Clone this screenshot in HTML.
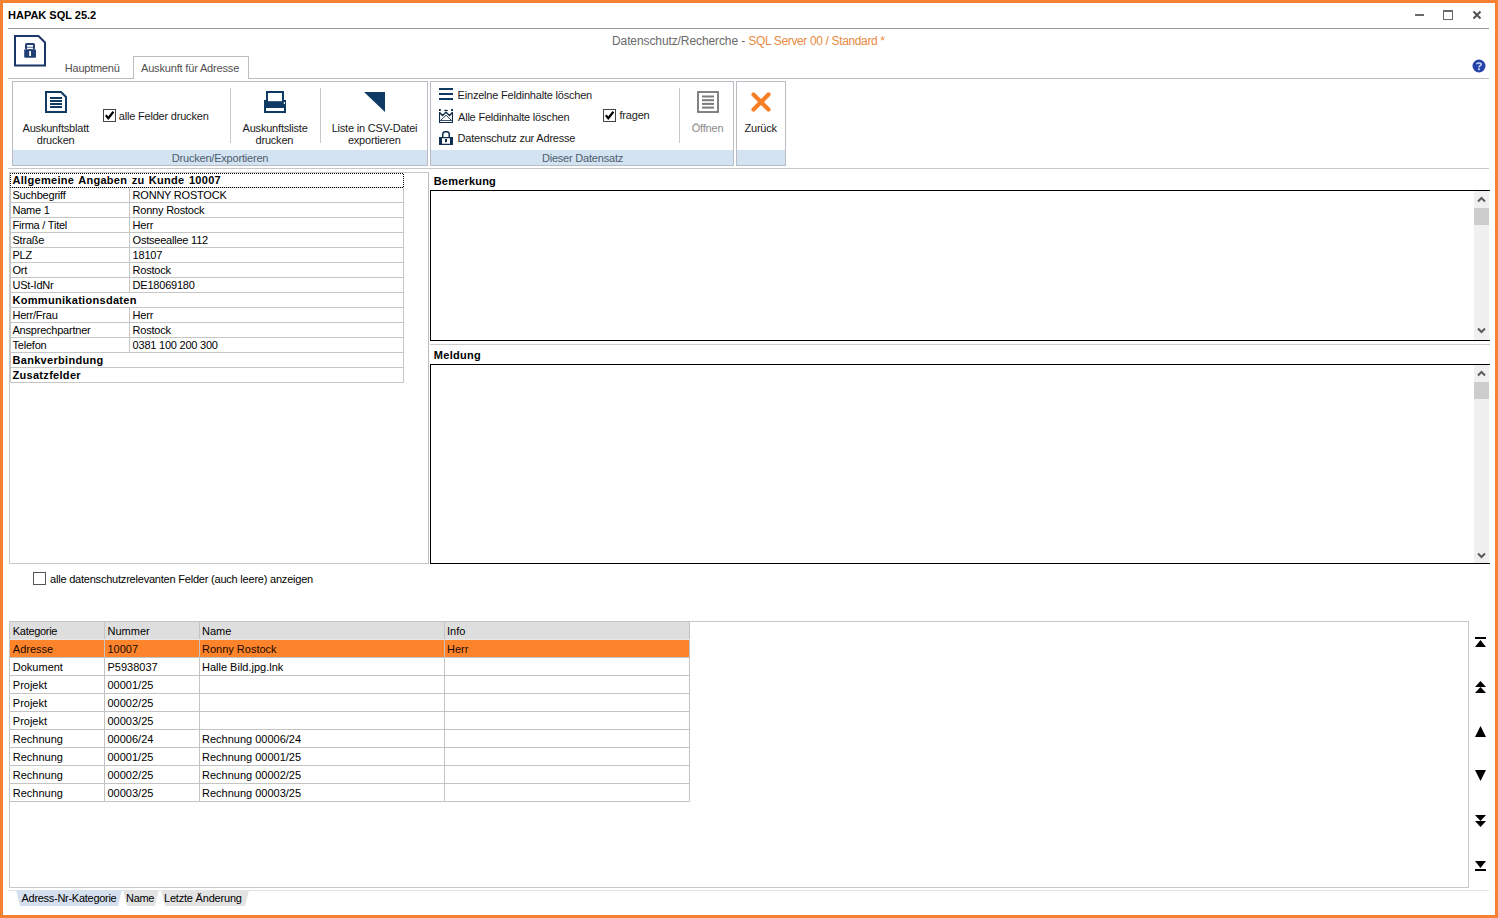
<!DOCTYPE html>
<html><head><meta charset="utf-8">
<style>
*{margin:0;padding:0;box-sizing:border-box;}
html,body{width:1498px;height:918px;overflow:hidden;background:#fff;}
body{position:relative;font-family:"Liberation Sans",sans-serif;color:#000;}
.a{position:absolute;}
.t{position:absolute;white-space:nowrap;line-height:1;}
.hl{position:absolute;height:1px;}
.vl{position:absolute;width:1px;}
.rb{font-size:11px;color:#1a1a1a;letter-spacing:-0.2px;}
.tb .t{font-size:11px;letter-spacing:-0.22px;}
.tb .b{letter-spacing:0.3px;word-spacing:1px;}
.gr .t{font-size:11px;letter-spacing:0px;}
.b{font-weight:bold;}
.c{position:absolute;white-space:nowrap;line-height:1;width:200px;text-align:center;}
</style></head><body>
<!-- window frame -->
<div class="a" style="left:0;top:0;width:1498px;height:918px;border:3px solid #F68132;"></div>

<!-- title bar -->
<div class="t" id="title" style="left:8px;top:9.7px;font-size:11px;font-weight:bold;">HAPAK SQL 25.2</div>
<div class="hl" style="left:8px;top:28px;width:1481px;background:#9a9a9a;"></div>

<!-- window controls -->
<div class="a" style="left:1415px;top:14px;width:9px;height:2px;background:#6a6a6a;"></div>
<div class="a" style="left:1443px;top:10px;width:10px;height:10px;border:1px solid #6a6a6a;border-top-width:2px;"></div>
<svg class="a" style="left:1472px;top:10px" width="10" height="10" viewBox="0 0 10 10"><path d="M1.5 1.5L8.5 8.5M8.5 1.5L1.5 8.5" stroke="#505050" stroke-width="2"/></svg>

<!-- subtitle -->
<div class="t" id="sub" style="left:612px;top:34.8px;font-size:12px;letter-spacing:-0.1px;color:#6a6a6a;">Datenschutz/Recherche - <span style="color:#EA8A42;letter-spacing:-0.36px;">SQL Server 00 / Standard *</span></div>

<!-- app icon -->
<svg class="a" style="left:14px;top:35px" width="33" height="33" viewBox="0 0 33 33">
<path d="M1 1H24.5L31 7.5V30.6H1Z" fill="none" stroke="#1B3668" stroke-width="2"/>
<rect x="11" y="8" width="10" height="6.4" rx="1.6" fill="#213F75"/>
<rect x="13" y="10" width="6" height="1.8" fill="#fff"/>
<rect x="13" y="12.6" width="6" height="1.6" fill="#fff"/>
<rect x="10.2" y="14.2" width="11.8" height="8.5" rx="1.2" fill="#213F75"/>
<rect x="15.2" y="16" width="1.8" height="5" fill="#fff"/>
</svg>

<!-- tabs -->
<div class="t" id="tab1" style="left:64.8px;top:62.5px;font-size:11px;letter-spacing:-0.24px;color:#505050;">Hauptmenü</div>
<div class="a" style="left:133px;top:56px;width:116px;height:23px;border:1px solid #bdbdbd;border-bottom:none;background:#fff;"></div>
<div class="t" id="tab2" style="left:141px;top:62.5px;font-size:11px;letter-spacing:-0.17px;color:#505050;">Auskunft für Adresse</div>
<div class="hl" style="left:8px;top:78px;width:125px;background:#bdbdbd;"></div>
<div class="hl" style="left:249px;top:78px;width:1240px;background:#bdbdbd;"></div>

<!-- help icon -->
<svg class="a" style="left:1471px;top:58px" width="16" height="16" viewBox="0 0 16 16">
<circle cx="8" cy="8" r="6.5" fill="#2443A8"/>
<path d="M5.8 6.2C5.8 4.6 10.2 4.6 10.2 6.4C10.2 7.8 8 7.6 8 9.4" fill="none" stroke="#c8d4f4" stroke-width="1.6"/>
<rect x="7.1" y="10.4" width="1.8" height="1.8" fill="#c8d4f4"/>
</svg>

<!-- RIBBON -->
<div class="a" style="left:12px;top:81px;width:416px;height:85px;border:1px solid #b9bdc3;background:#fff;"></div>
<div class="a" style="left:13px;top:150px;width:414px;height:15px;background:#D3E3F1;"></div>
<div class="a" style="left:430px;top:81px;width:304px;height:85px;border:1px solid #b9bdc3;background:#fff;"></div>
<div class="a" style="left:431px;top:150px;width:302px;height:15px;background:#D3E3F1;"></div>
<div class="a" style="left:736px;top:81px;width:50px;height:85px;border:1px solid #b9bdc3;background:#fff;"></div>
<div class="a" style="left:737px;top:150px;width:48px;height:15px;background:#D3E3F1;"></div>
<div class="hl" style="left:8px;top:168px;width:1481px;background:#c8c8c8;"></div>
<div class="vl" style="left:230px;top:88px;height:55px;background:#c8c8c8;"></div>
<div class="vl" style="left:320px;top:88px;height:55px;background:#c8c8c8;"></div>
<div class="vl" style="left:679px;top:88px;height:55px;background:#c8c8c8;"></div>

<div class="c rb" id="cap1" style="left:120.0px;top:152.5px;color:#4f5d6e;">Drucken/Exportieren</div>
<div class="c rb" id="cap2" style="left:482.5px;top:152.5px;color:#4f5d6e;">Dieser Datensatz</div>

<!-- Auskunftsblatt icon -->
<svg class="a" style="left:45px;top:91px" width="22" height="22" viewBox="0 0 22 22">
<path d="M1 1H16L21 6V21H1Z" fill="none" stroke="#0E3A63" stroke-width="2"/>
<rect x="5" y="6" width="12" height="2" fill="#0E3A63"/>
<rect x="5" y="9" width="12" height="2" fill="#0E3A63"/>
<rect x="5" y="12" width="12" height="2" fill="#0E3A63"/>
<rect x="5" y="15" width="12" height="2" fill="#0E3A63"/>
</svg>
<div class="c rb" id="b1a" style="left:-44.3px;top:122.6px;">Auskunftsblatt</div>
<div class="c rb" id="b1b" style="left:-44.4px;top:135.4px;">drucken</div>

<!-- checkbox alle Felder -->
<div class="a" style="left:103px;top:109px;width:13px;height:13px;border:1px solid #444;background:#fff;"></div>
<svg class="a" style="left:104px;top:110px" width="11" height="11" viewBox="0 0 11 11"><path d="M1.8 5.3L4.3 8.2L9.4 1.8" fill="none" stroke="#000" stroke-width="2.2"/></svg>
<div class="t rb" id="cb1" style="left:118.8px;top:110.5px;">alle Felder drucken</div>

<!-- printer -->
<svg class="a" style="left:264px;top:91px" width="22" height="22" viewBox="0 0 22 22">
<rect x="0" y="9" width="22" height="13" fill="#0E3A63"/>
<rect x="2" y="0" width="18" height="10" fill="#0E3A63"/>
<rect x="4" y="2" width="14" height="8.2" fill="#fff"/>
<rect x="2" y="17" width="18" height="3" fill="#fff"/>
<rect x="19.8" y="11" width="1.2" height="2" fill="#fff"/>
</svg>
<div class="c rb" id="b2a" style="left:175.1px;top:122.6px;">Auskunftsliste</div>
<div class="c rb" id="b2b" style="left:174.4px;top:135.4px;">drucken</div>

<!-- CSV triangle -->
<svg class="a" style="left:364px;top:92px" width="21" height="20" viewBox="0 0 21 20"><path d="M0 0H21V20Z" fill="#0E3A63"/></svg>
<div class="c rb" id="b3a" style="left:274.5px;top:122.6px;">Liste in CSV-Datei</div>
<div class="c rb" id="b3b" style="left:274.3px;top:135.4px;">exportieren</div>

<!-- group 2 -->
<svg class="a" style="left:439px;top:87px" width="14" height="13" viewBox="0 0 14 13">
<rect x="0" y="1" width="14" height="2" fill="#0E3A63"/><rect x="0" y="6" width="14" height="2" fill="#0E3A63"/><rect x="0" y="11" width="14" height="2" fill="#0E3A63"/></svg>
<div class="t rb" id="g2a" style="left:457.6px;top:89.7px;">Einzelne Feldinhalte löschen</div>
<svg class="a" style="left:439px;top:109px" width="14" height="14" viewBox="0 0 14 14">
<g fill="#0E2A45"><rect x="0" y="0" width="1.8" height="2"/><rect x="12.2" y="0" width="1.8" height="2"/><path d="M5 2H9C9 0.3 5 0.3 5 2Z"/>
<rect x="0" y="3" width="1.1" height="11"/><rect x="12.9" y="3" width="1.1" height="11"/><rect x="0" y="13" width="14" height="1"/><rect x="1" y="11" width="12" height="0.8"/></g>
<path d="M0.3 3.3L3.5 6.6L7 3.3L10.5 6.6L13.7 3.3" fill="none" stroke="#0E2A45" stroke-width="1.4"/>
<path d="M2 11L7 6.2L12 11" fill="none" stroke="#0E2A45" stroke-width="0.9"/>
</svg>
<div class="t rb" id="g2b" style="left:458.0px;top:111.5px;">Alle Feldinhalte löschen</div>
<svg class="a" style="left:439px;top:131px" width="14" height="14" viewBox="0 0 14 14">
<path d="M3.75 6.5V3A2.5 2.5 0 0 1 6.25 0.75H7.75A2.5 2.5 0 0 1 10.25 3V6.5" fill="none" stroke="#0E2F52" stroke-width="1.5"/>
<path d="M0 6H14V14H0Z M3 7.2V12.8H11V7.2Z" fill="#0E2F52" fill-rule="evenodd"/>
<rect x="6" y="8" width="2" height="3.2" fill="#0E2F52"/>
</svg>
<div class="t rb" id="g2c" style="left:457.6px;top:133.3px;">Datenschutz zur Adresse</div>

<div class="a" style="left:603px;top:109px;width:13px;height:13px;border:1px solid #444;background:#fff;"></div>
<svg class="a" style="left:604px;top:110px" width="11" height="11" viewBox="0 0 11 11"><path d="M1.8 5.3L4.3 8.2L9.4 1.8" fill="none" stroke="#000" stroke-width="2.2"/></svg>
<div class="t rb" id="cb2" style="left:619.5px;top:110.3px;">fragen</div>

<!-- Öffnen -->
<svg class="a" style="left:697px;top:91px" width="22" height="22" viewBox="0 0 22 22">
<rect x="1" y="1" width="20" height="20" fill="none" stroke="#767676" stroke-width="1.8"/>
<rect x="5" y="4.5" width="12" height="2" fill="#7b7b7b"/><rect x="5" y="8.2" width="12" height="2" fill="#7b7b7b"/><rect x="5" y="11.9" width="12" height="2" fill="#7b7b7b"/><rect x="5" y="15.6" width="12" height="2" fill="#7b7b7b"/>
</svg>
<div class="c rb" id="offn" style="left:607.5px;top:122.6px;color:#8a8a8a;">Öffnen</div>

<!-- Zurück -->
<svg class="a" style="left:751px;top:92px" width="20" height="20" viewBox="0 0 20 20"><path d="M2.5 2.5L17.5 17.5M17.5 2.5L2.5 17.5" stroke="#F87E24" stroke-width="4.2" stroke-linecap="round"/></svg>
<div class="c rb" id="zur" style="left:660.7px;top:122.6px;">Zurück</div>

<!-- LEFT PANEL -->
<div class="a" id="lp" style="left:9px;top:172px;width:420px;height:392px;border:1px solid #c8c8c8;border-right-color:#bdbdbd;"></div>
<div class="a" style="left:10px;top:173px;width:394px;height:210px;">
<svg class="a" style="left:0;top:0" width="394" height="210">
<g fill="none" stroke="#c6c6c6" stroke-width="1">
<path d="M0.5 14V209.5H393.5V14"/>
<path d="M0 14.5H394M0 29.5H394M0 44.5H394M0 59.5H394M0 74.5H394M0 89.5H394M0 104.5H394M0 119.5H394M0 134.5H394M0 149.5H394M0 164.5H394M0 179.5H394M0 194.5H394"/>
<path d="M119.5 15V119M119.5 135V179"/>
</g>
<rect x="0.5" y="0.5" width="393" height="14" fill="none" stroke="#000" stroke-width="1" stroke-dasharray="1 1" stroke-dashoffset="0.5"/>
</svg>
</div>
<div class="tb">
<div class="t b" id="tr0" style="left:12.5px;top:174.7px;">Allgemeine Angaben zu Kunde 10007</div>
<div class="t" style="left:12.5px;top:189.7px;">Suchbegriff</div><div class="t" style="left:132.6px;top:189.7px;">RONNY ROSTOCK</div>
<div class="t" style="left:12.5px;top:204.7px;">Name 1</div><div class="t" style="left:132.6px;top:204.7px;">Ronny Rostock</div>
<div class="t" style="left:12.5px;top:219.7px;">Firma / Titel</div><div class="t" style="left:132.6px;top:219.7px;">Herr</div>
<div class="t" style="left:12.5px;top:234.7px;">Straße</div><div class="t" style="left:132.6px;top:234.7px;">Ostseeallee 112</div>
<div class="t" style="left:12.5px;top:249.7px;">PLZ</div><div class="t" style="left:132.6px;top:249.7px;">18107</div>
<div class="t" style="left:12.5px;top:264.7px;">Ort</div><div class="t" style="left:132.6px;top:264.7px;">Rostock</div>
<div class="t" style="left:12.5px;top:279.7px;">USt-IdNr</div><div class="t" style="left:132.6px;top:279.7px;">DE18069180</div>
<div class="t b" style="left:12.5px;top:294.7px;">Kommunikationsdaten</div>
<div class="t" style="left:12.5px;top:309.7px;">Herr/Frau</div><div class="t" style="left:132.6px;top:309.7px;">Herr</div>
<div class="t" style="left:12.5px;top:324.7px;">Ansprechpartner</div><div class="t" style="left:132.6px;top:324.7px;">Rostock</div>
<div class="t" style="left:12.5px;top:339.7px;">Telefon</div><div class="t" style="left:132.6px;top:339.7px;">0381 100 200 300</div>
<div class="t b" style="left:12.5px;top:354.7px;">Bankverbindung</div>
<div class="t b" style="left:12.5px;top:369.7px;">Zusatzfelder</div>
</div>

<!-- RIGHT: Bemerkung / Meldung -->
<div class="t b" id="bem" style="left:433.7px;top:175.5px;font-size:11px;letter-spacing:0.2px;">Bemerkung</div>
<div class="a" style="left:430px;top:190px;width:1060px;height:151px;border:1px solid #000;border-right:none;"></div>
<div class="a" style="left:1474px;top:191px;width:15px;height:149px;background:#f0f0f0;"></div>
<div class="a" style="left:1474px;top:208px;width:15px;height:17px;background:#cdcdcd;"></div>
<svg class="a" style="left:1475.5px;top:195px" width="11" height="8" viewBox="0 0 11 8"><path d="M2 6.5L5.5 3L9 6.5" fill="none" stroke="#5a5a5a" stroke-width="2"/></svg>
<svg class="a" style="left:1475.5px;top:326px" width="11" height="8" viewBox="0 0 11 8"><path d="M2 2.5L5.5 6L9 2.5" fill="none" stroke="#5a5a5a" stroke-width="2"/></svg>
<div class="hl" style="left:430px;top:344px;width:1060px;background:#cfcfcf;"></div>
<div class="t b" id="mel" style="left:433.8px;top:349.6px;font-size:11px;letter-spacing:0.3px;">Meldung</div>
<div class="a" style="left:430px;top:364px;width:1060px;height:200px;border:1px solid #000;border-right:none;"></div>
<div class="a" style="left:1474px;top:365px;width:15px;height:198px;background:#f0f0f0;"></div>
<div class="a" style="left:1474px;top:382px;width:15px;height:17px;background:#cdcdcd;"></div>
<svg class="a" style="left:1475.5px;top:369px" width="11" height="8" viewBox="0 0 11 8"><path d="M2 6.5L5.5 3L9 6.5" fill="none" stroke="#5a5a5a" stroke-width="2"/></svg>
<svg class="a" style="left:1475.5px;top:551px" width="11" height="8" viewBox="0 0 11 8"><path d="M2 2.5L5.5 6L9 2.5" fill="none" stroke="#5a5a5a" stroke-width="2"/></svg>

<!-- checkbox -->
<div class="a" style="left:33px;top:572px;width:13px;height:13px;border:1px solid #555;background:#fff;"></div>
<div class="t" id="cbx" style="left:50px;top:574px;font-size:11px;letter-spacing:-0.21px;">alle datenschutzrelevanten Felder (auch leere) anzeigen</div>

<!-- GRID -->
<div class="a" style="left:9px;top:621px;width:1460px;height:267px;border:1px solid #c8c8c8;"></div>
<div class="a" style="left:10px;top:622px;width:680px;height:18px;background:#dedede;"></div>
<div class="a" style="left:10px;top:640px;width:680px;height:17px;background:#FE842C;"></div>
<svg class="a" style="left:10px;top:621px" width="681" height="182">
<g fill="none" stroke="#c4c4c4" stroke-width="1">
<path d="M0 0.5H680M679.5 0V180.5H0"/>
<path d="M0 36.5H680M0 54.5H680M0 72.5H680M0 90.5H680M0 108.5H680M0 126.5H680M0 144.5H680M0 162.5H680"/>
<path d="M94.5 0V180M189.5 0V180M434.5 0V180"/>
</g>
<path d="M0 18.5H680" stroke="#e8e8e8" stroke-width="1"/>
</svg>
<div class="gr">
<div class="t" id="gh1" style="left:12.8px;top:625.7px;letter-spacing:-0.3px;">Kategorie</div><div class="t" style="left:107.5px;top:625.7px;">Nummer</div><div class="t" style="left:202px;top:625.7px;">Name</div><div class="t" style="left:447px;top:625.7px;">Info</div>
<div class="t" style="left:12.8px;top:644.0px;color:#1a0a00;">Adresse</div><div class="t" style="left:107.5px;top:644.0px;color:#1a0a00;">10007</div><div class="t" style="left:202px;top:644.0px;color:#1a0a00;">Ronny Rostock</div><div class="t" style="left:447px;top:644.0px;color:#1a0a00;">Herr</div>
<div class="t" id="gd" style="left:12.8px;top:662.0px;">Dokument</div><div class="t" id="gp" style="left:107.5px;top:662.0px;">P5938037</div><div class="t" style="left:202px;top:662.0px;">Halle Bild.jpg.lnk</div>
<div class="t" style="left:12.8px;top:680.0px;">Projekt</div><div class="t" style="left:107.5px;top:680.0px;">00001/25</div>
<div class="t" style="left:12.8px;top:698.0px;">Projekt</div><div class="t" style="left:107.5px;top:698.0px;">00002/25</div>
<div class="t" style="left:12.8px;top:716.0px;">Projekt</div><div class="t" style="left:107.5px;top:716.0px;">00003/25</div>
<div class="t" style="left:12.8px;top:734.0px;">Rechnung</div><div class="t" style="left:107.5px;top:734.0px;">00006/24</div><div class="t" style="left:202px;top:734.0px;">Rechnung 00006/24</div>
<div class="t" style="left:12.8px;top:752.0px;">Rechnung</div><div class="t" style="left:107.5px;top:752.0px;">00001/25</div><div class="t" style="left:202px;top:752.0px;">Rechnung 00001/25</div>
<div class="t" style="left:12.8px;top:770.0px;">Rechnung</div><div class="t" style="left:107.5px;top:770.0px;">00002/25</div><div class="t" style="left:202px;top:770.0px;">Rechnung 00002/25</div>
<div class="t" style="left:12.8px;top:788.0px;">Rechnung</div><div class="t" style="left:107.5px;top:788.0px;">00003/25</div><div class="t" style="left:202px;top:788.0px;">Rechnung 00003/25</div>
</div>

<!-- NAV -->
<svg class="a" style="left:1475px;top:636px" width="11" height="240" viewBox="0 0 11 240">
<g fill="#000">
<rect x="0" y="1" width="11" height="2"/><path d="M0 11H11L5.5 4Z"/>
<path d="M0 51H11L5.5 45Z"/><path d="M0 57H11L5.5 51Z"/>
<path d="M0 101H11L5.5 90Z"/>
<path d="M0 134H11L5.5 145Z"/>
<path d="M0 179H11L5.5 185Z"/><path d="M0 185H11L5.5 191Z"/>
<path d="M0 225H11L5.5 232Z"/><rect x="0" y="233" width="11" height="2"/>
</g>
</svg>

<!-- bottom tabs -->
<div class="hl" style="left:8px;top:890px;width:1481px;background:#e2e2e2;"></div>
<svg class="a" style="left:16px;top:889px" width="235" height="18">
<path d="M0 1H106L102 17H4Z" fill="#D6DFEE"/>
<path d="M107 1H143L139 17H111Z" fill="#e3e3e3"/>
<path d="M145 1H233L229 17H149Z" fill="#e3e3e3"/>
</svg>
<div class="gr">
<div class="t" id="bt1" style="left:21.5px;top:893.3px;letter-spacing:-0.28px;">Adress-Nr-Kategorie</div>
<div class="t" id="bt2" style="left:126px;top:893.3px;letter-spacing:-0.3px;">Name</div>
<div class="t" id="bt3" style="left:164px;top:893.3px;letter-spacing:-0.2px;">Letzte Änderung</div>
</div>

</body></html>
